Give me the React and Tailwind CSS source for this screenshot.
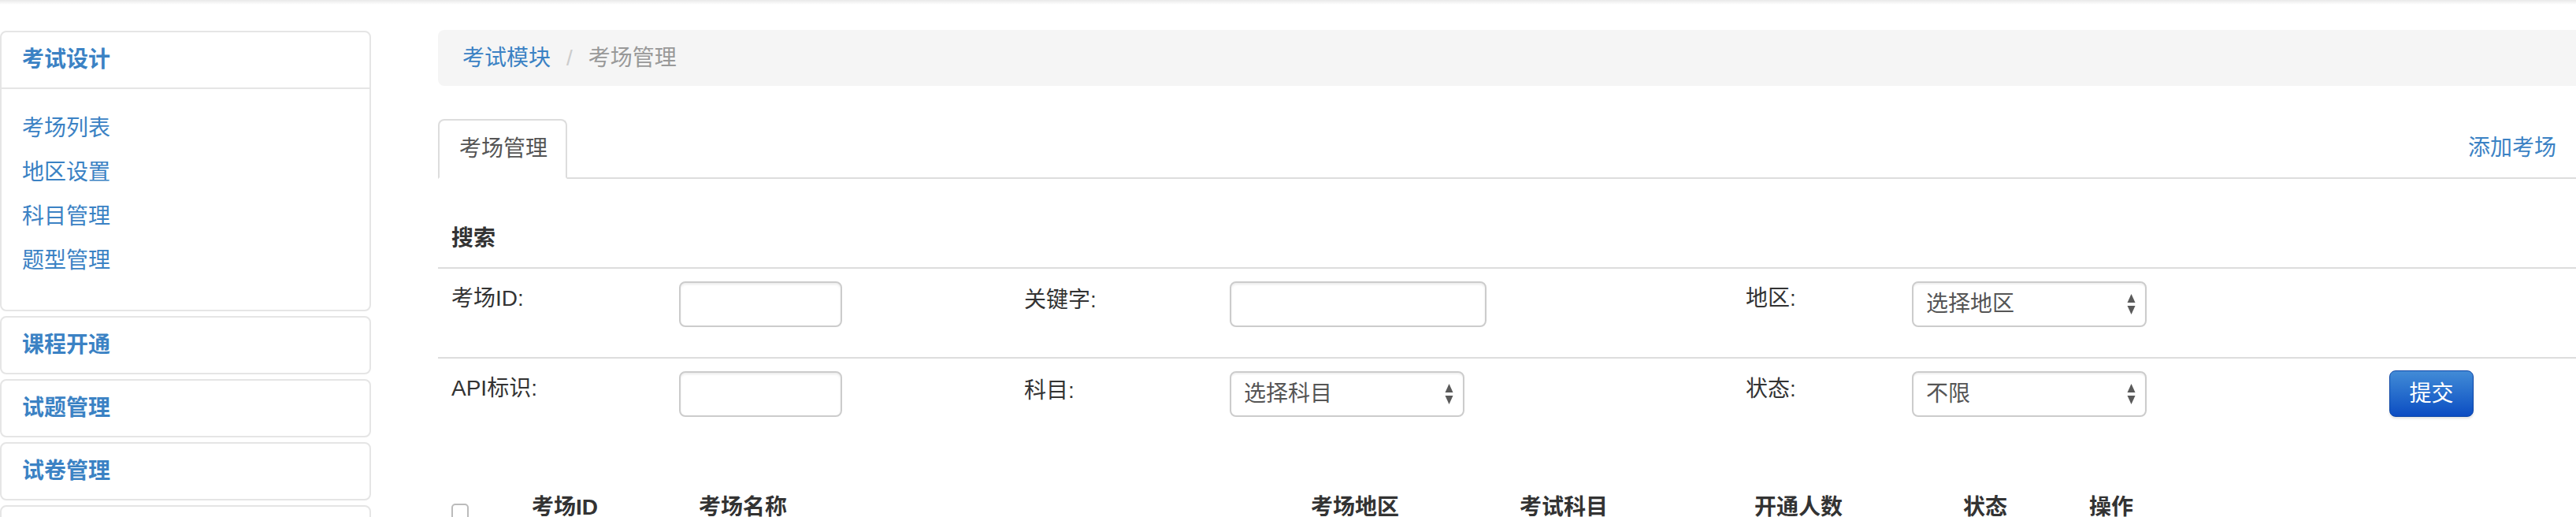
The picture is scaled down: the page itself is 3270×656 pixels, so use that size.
import React from "react";

const font = "font-['Liberation_Sans','Noto_Sans_CJK_SC',sans-serif]";

const SelectBox = ({ label }) => (
  <div className="w-[298px] h-[58px] border-2 border-[#cccccc] rounded-[8px] bg-white flex items-center justify-between pl-[16px] pr-[12px] shadow-[inset_0_2px_2px_rgba(0,0,0,0.06)]">
    <span className="text-[28px] leading-[40px] text-[#555555]">{label}</span>
    <svg width="11" height="28" viewBox="0 0 11 28">
      <path d="M5.5 1 L10.5 12 L0.5 12 Z" fill="#5a5a5a" />
      <path d="M0.5 16 L10.5 16 L5.5 27 Z" fill="#5a5a5a" />
    </svg>
  </div>
);

const TextInput = ({ width }) => (
  <div
    className={`${width} h-[58px] border-2 border-[#cccccc] rounded-[8px] bg-white shadow-[inset_0_2px_3px_rgba(0,0,0,0.08)]`}
  ></div>
);

const App = () => {
  const menuItems = ["考场列表", "地区设置", "科目管理", "题型管理"];
  const collapsed = ["课程开通", "试题管理", "试卷管理", "系统设置"];
  const headers = [
    { label: "考场ID", w: "w-[212px]" },
    { label: "考场名称", w: "w-[777px]" },
    { label: "考场地区", w: "w-[265px]" },
    { label: "考试科目", w: "w-[298px]" },
    { label: "开通人数", w: "w-[265px]" },
    { label: "状态", w: "w-[160px]" },
    { label: "操作", w: "w-[200px]" },
  ];

  return (
    <div className={`w-[3270px] h-[656px] overflow-hidden bg-white ${font}`}>
      <div className="h-[6px] bg-linear-to-b from-[#e9e9e9] to-white"></div>
      <div className="flex">
        {/* Sidebar */}
        <div className="w-[471px] shrink-0 mt-[33px]">
          <div className="border-2 border-[#e5e5e5] rounded-[8px] h-[356px]">
            <div className="h-[72px] border-b-2 border-[#e5e5e5] flex items-center pl-[26px]">
              <span className="text-[28px] font-bold text-[#3b82c4]">考试设计</span>
            </div>
            <ul className="pt-[22px] pl-[26px]">
              {menuItems.map((m) => (
                <li key={m} className="text-[28px] leading-[56px] text-[#3b82c4]">
                  {m}
                </li>
              ))}
            </ul>
          </div>
          {collapsed.map((c, i) => (
            <div
              key={i}
              className="mt-[6px] h-[74px] border-2 border-[#e5e5e5] rounded-[8px] flex items-center pl-[26px]"
            >
              <span className="text-[28px] font-bold text-[#3b82c4]">{c}</span>
            </div>
          ))}
        </div>

        {/* Main content */}
        <div className="w-[2724px] shrink-0 ml-[85px] mt-[32px]">
          <div className="h-[71px] bg-[#f5f5f5] rounded-[8px] flex items-center pl-[31px] text-[28px]">
            <span className="text-[#3b82c4]">考试模块</span>
            <span className="px-[20px] text-[#cccccc]">/</span>
            <span className="text-[#999999]">考场管理</span>
          </div>

          {/* Tabs */}
          <div className="mt-[42px] flex items-end border-b-2 border-[#dddddd] h-[76px]">
            <div className="-mb-[2px] h-[76px] w-[164px] border-2 border-[#dddddd] border-b-white bg-white rounded-t-[8px] flex items-center pl-[25px]">
              <span className="text-[28px] text-[#555555]">考场管理</span>
            </div>
            <div className="ml-auto mr-[35px] self-center text-[28px] text-[#3b82c4]">添加考场</div>
          </div>

          {/* Search */}
          <div className="mt-[37px]">
            <div className="h-[77px] border-b-2 border-[#dddddd] pl-[17px] pt-[19px]">
              <span className="text-[28px] leading-[40px] font-bold text-[#333333]">搜索</span>
            </div>
            <div className="grid grid-cols-[289px_438px_261px_655px_211px_606px_1fr] h-[114px] border-b-2 border-[#dddddd] text-[28px] leading-[40px] text-[#333333]">
              <div className="pl-[17px] pt-[18px]">考场ID:</div>
              <div className="pl-[17px] pt-[16px]">
                <TextInput width="w-[207px]" />
              </div>
              <div className="pl-[17px] pt-[20px]">关键字:</div>
              <div className="pl-[17px] pt-[16px]">
                <TextInput width="w-[326px]" />
              </div>
              <div className="pl-[17px] pt-[18px]">地区:</div>
              <div className="pl-[17px] pt-[16px]">
                <SelectBox label="选择地区" />
              </div>
              <div></div>
            </div>
            <div className="grid grid-cols-[289px_438px_261px_655px_211px_606px_1fr] h-[112px] text-[28px] leading-[40px] text-[#333333]">
              <div className="pl-[17px] pt-[18px]">API标识:</div>
              <div className="pl-[17px] pt-[16px]">
                <TextInput width="w-[207px]" />
              </div>
              <div className="pl-[17px] pt-[21px]">科目:</div>
              <div className="pl-[17px] pt-[16px]">
                <SelectBox label="选择科目" />
              </div>
              <div className="pl-[17px] pt-[19px]">状态:</div>
              <div className="pl-[17px] pt-[16px]">
                <SelectBox label="不限" />
              </div>
              <div className="pl-[17px] pt-[15px]">
                <button className="w-[107px] h-[59px] rounded-[8px] bg-linear-to-b from-[#428bd6] to-[#0c4cc2] border border-[#0d47a8] text-white text-[28px] leading-[40px] shadow-[0_2px_3px_rgba(0,0,0,0.12)]">
                  提交
                </button>
              </div>
            </div>
          </div>

          {/* Table header */}
          <div className="mt-[57px] flex items-start text-[28px] leading-[40px] font-bold text-[#333333]">
            <div className="w-[119px] pl-[17px] pt-[15px]">
              <div className="w-[22px] h-[22px] border-2 border-[#bbbbbb] rounded-[5px] bg-white"></div>
            </div>
            {headers.map((h) => (
              <div key={h.label} className={h.w}>
                {h.label}
              </div>
            ))}
          </div>
        </div>
      </div>
    </div>
  );
};

export default App;
